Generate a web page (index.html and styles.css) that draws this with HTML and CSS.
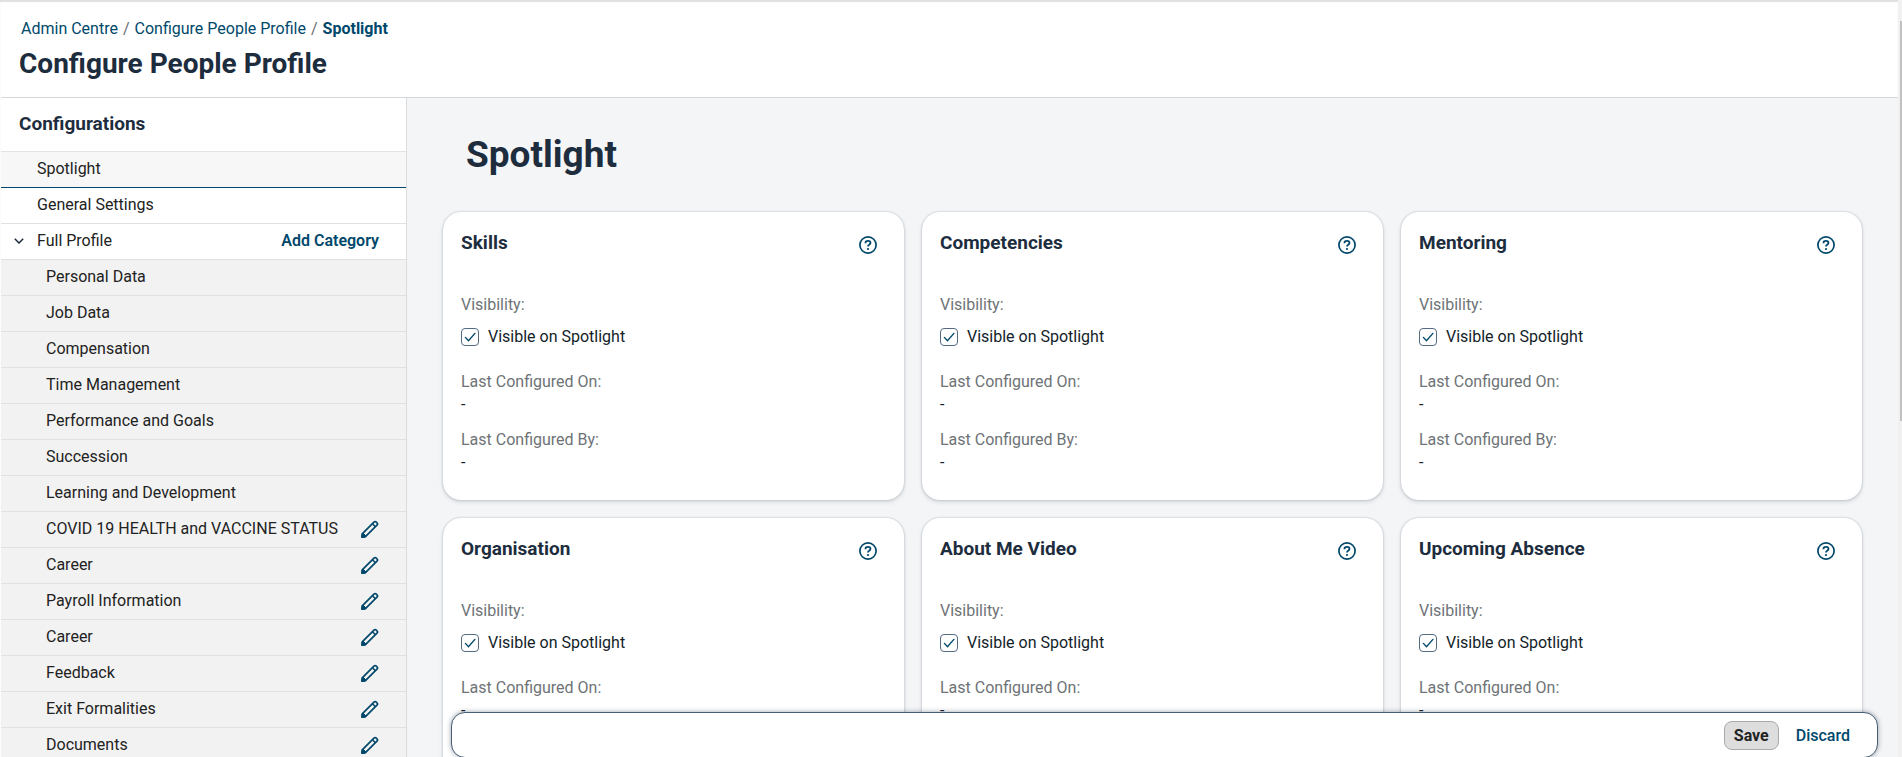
FILE: index.html
```
<!DOCTYPE html>
<html lang="en">
<head>
    <meta charset="UTF-8">
    <meta name="viewport" content="width=device-width, initial-scale=1.0">
    <title>Configure People Profile</title>
    <link rel="stylesheet" href="styles.css">
</head>
<body>
    <!-- shared icons -->
    <svg class="icon-defs" width="0" height="0" aria-hidden="true">
        <symbol id="icon-help" viewBox="0 0 18 18">
            <circle cx="9" cy="9" r="8.1" fill="none" stroke="currentColor" stroke-width="1.7"/>
            <path d="M6.5 7.2V6.8C6.5 5.5 7.5 4.8 9 4.8s2.5.8 2.5 2c0 1-.6 1.5-1.3 2-.7.4-1.2.8-1.2 1.7" fill="none" stroke="currentColor" stroke-width="1.8"/>
            <circle cx="9" cy="13" r="1.1" fill="currentColor"/>
        </symbol>
        <symbol id="icon-edit" viewBox="0 0 18 18">
            <path d="M1 17l.7-3.6L13.2 1.9a1.2 1.2 0 0 1 1.8 0l1.2 1.2a1.2 1.2 0 0 1 0 1.8L4.7 16.3z" fill="none" stroke="currentColor" stroke-width="1.7" stroke-linejoin="round"/>
            <path d="M11.4 3.7l3 3" fill="none" stroke="currentColor" stroke-width="1.5"/>
            <path d="M.6 17.4l.3-3.8 1.4-.3 2.5 2.5-.4 1.4z" fill="currentColor" stroke="currentColor" stroke-linejoin="round"/>
        </symbol>
    </svg>

    <div class="page">
        <header class="header">
            <nav class="breadcrumb" aria-label="Breadcrumb">
                <a href="#">Admin Centre</a>
                <span>/</span>
                <a href="#">Configure People Profile</a>
                <span>/</span>
                <a href="#" class="current">Spotlight</a>
            </nav>
            <h1>Configure People Profile</h1>
        </header>

        <div class="content">
            <aside class="sidebar">
                <h2>Configurations</h2>
                <ul class="config-list">
                    <li class="selected"><a href="#">Spotlight</a></li>
                    <li><a href="#">General Settings</a></li>
                    <li>
                        <button class="toggle" aria-label="Collapse Full Profile">
                            <svg width="10" height="6" viewBox="0 0 10 6"><path d="M.8.8L5 5 9.2.8" fill="none" stroke="currentColor" stroke-width="1.5"/></svg>
                        </button>
                        <a href="#">Full Profile</a>
                        <button class="add-btn">Add Category</button>
                    </li>
                    <li class="sub"><a href="#">Personal Data</a></li>
                    <li class="sub"><a href="#">Job Data</a></li>
                    <li class="sub"><a href="#">Compensation</a></li>
                    <li class="sub"><a href="#">Time Management</a></li>
                    <li class="sub"><a href="#">Performance and Goals</a></li>
                    <li class="sub"><a href="#">Succession</a></li>
                    <li class="sub"><a href="#">Learning and Development</a></li>
                    <li class="sub"><a href="#">COVID 19 HEALTH and VACCINE STATUS</a><button class="icon-btn" aria-label="Edit"><svg><use href="#icon-edit"/></svg></button></li>
                    <li class="sub"><a href="#">Career</a><button class="icon-btn" aria-label="Edit"><svg><use href="#icon-edit"/></svg></button></li>
                    <li class="sub"><a href="#">Payroll Information</a><button class="icon-btn" aria-label="Edit"><svg><use href="#icon-edit"/></svg></button></li>
                    <li class="sub"><a href="#">Career</a><button class="icon-btn" aria-label="Edit"><svg><use href="#icon-edit"/></svg></button></li>
                    <li class="sub"><a href="#">Feedback</a><button class="icon-btn" aria-label="Edit"><svg><use href="#icon-edit"/></svg></button></li>
                    <li class="sub"><a href="#">Exit Formalities</a><button class="icon-btn" aria-label="Edit"><svg><use href="#icon-edit"/></svg></button></li>
                    <li class="sub"><a href="#">Documents</a><button class="icon-btn" aria-label="Edit"><svg><use href="#icon-edit"/></svg></button></li>
                </ul>
            </aside>

            <main class="main">
                <h2 class="section-title">Spotlight</h2>

                <div class="cards">
                    <section class="card">
                        <div class="card-header">
                            <h3>Skills</h3>
                            <button class="icon-btn" aria-label="Help"><svg><use href="#icon-help"/></svg></button>
                        </div>
                        <p class="label">Visibility:</p>
                        <label class="check" for="skills"><input type="checkbox" id="skills" checked>Visible on Spotlight</label>
                        <dl>
                            <dt>Last Configured On:</dt>
                            <dd>-</dd>
                            <dt>Last Configured By:</dt>
                            <dd>-</dd>
                        </dl>
                    </section>

                    <section class="card">
                        <div class="card-header">
                            <h3>Competencies</h3>
                            <button class="icon-btn" aria-label="Help"><svg><use href="#icon-help"/></svg></button>
                        </div>
                        <p class="label">Visibility:</p>
                        <label class="check" for="competencies"><input type="checkbox" id="competencies" checked>Visible on Spotlight</label>
                        <dl>
                            <dt>Last Configured On:</dt>
                            <dd>-</dd>
                            <dt>Last Configured By:</dt>
                            <dd>-</dd>
                        </dl>
                    </section>

                    <section class="card">
                        <div class="card-header">
                            <h3>Mentoring</h3>
                            <button class="icon-btn" aria-label="Help"><svg><use href="#icon-help"/></svg></button>
                        </div>
                        <p class="label">Visibility:</p>
                        <label class="check" for="mentoring"><input type="checkbox" id="mentoring" checked>Visible on Spotlight</label>
                        <dl>
                            <dt>Last Configured On:</dt>
                            <dd>-</dd>
                            <dt>Last Configured By:</dt>
                            <dd>-</dd>
                        </dl>
                    </section>

                    <section class="card">
                        <div class="card-header">
                            <h3>Organisation</h3>
                            <button class="icon-btn" aria-label="Help"><svg><use href="#icon-help"/></svg></button>
                        </div>
                        <p class="label">Visibility:</p>
                        <label class="check" for="organisation"><input type="checkbox" id="organisation" checked>Visible on Spotlight</label>
                        <dl>
                            <dt>Last Configured On:</dt>
                            <dd>-</dd>
                        </dl>
                    </section>

                    <section class="card">
                        <div class="card-header">
                            <h3>About Me Video</h3>
                            <button class="icon-btn" aria-label="Help"><svg><use href="#icon-help"/></svg></button>
                        </div>
                        <p class="label">Visibility:</p>
                        <label class="check" for="aboutMe"><input type="checkbox" id="aboutMe" checked>Visible on Spotlight</label>
                        <dl>
                            <dt>Last Configured On:</dt>
                            <dd>-</dd>
                        </dl>
                    </section>

                    <section class="card">
                        <div class="card-header">
                            <h3>Upcoming Absence</h3>
                            <button class="icon-btn" aria-label="Help"><svg><use href="#icon-help"/></svg></button>
                        </div>
                        <p class="label">Visibility:</p>
                        <label class="check" for="absence"><input type="checkbox" id="absence" checked>Visible on Spotlight</label>
                        <dl>
                            <dt>Last Configured On:</dt>
                            <dd>-</dd>
                        </dl>
                    </section>
                </div>

                <footer class="action-bar">
                    <button class="save-btn">Save</button>
                    <button class="discard-btn">Discard</button>
                </footer>
            </main>
        </div>
    </div>

    <div class="scrollbar"><div class="thumb"></div></div>
</body>
</html>
```

FILE: styles.css
```
* {
    box-sizing: border-box;
}

body {
    margin: 0;
    height: 100vh;
    display: flex;
    overflow: hidden;
    font-family: Roboto, "Noto Sans", Arial, sans-serif;
    font-size: 16px;
    line-height: 20px;
    color: #1d2d3e;
    background-color: #fff;
}

h1, h2, h3, p, ul, dl, dd {
    margin: 0;
    padding: 0;
}

a {
    color: #00486b;
    text-decoration: none;
}

button {
    font: inherit;
    color: #00486b;
    background: none;
    border: none;
    padding: 0;
    cursor: pointer;
}

.icon-defs {
    position: absolute;
}

.page {
    flex: 1;
    min-width: 0;
    display: flex;
    flex-direction: column;
    padding-left: 1px;
    box-shadow: inset 0 2px 1px #e0e0e0;
}

.header {
    padding: 19px 18px 16px;
    border-bottom: 1px solid #d5d8da;
}

.breadcrumb {
    display: flex;
    gap: 5px;
    padding-left: 2px;
}

.breadcrumb span {
    color: #6a6d70;
}

.breadcrumb .current {
    font-weight: bold;
}

.header h1 {
    margin-top: 8px;
    font-size: 28px;
    line-height: 34px;
    font-weight: 700;
}

.content {
    flex: 1;
    min-height: 0;
    display: flex;
}

/* left list */
.sidebar {
    flex: none;
    width: 406px;
    border-right: 1px solid #d9dcdf;
    overflow: hidden;
}

.sidebar h2 {
    padding: 14px 18px 15px;
    font-size: 19px;
    line-height: 24px;
    border-bottom: 1px solid #e3e3e3;
}

.config-list {
    list-style: none;
}

.config-list li {
    display: flex;
    align-items: center;
    height: 36px;
    padding: 0 27px 2px 36px;
    border-bottom: 1px solid #e1e1e1;
}

.config-list a {
    flex: 1;
    color: #222;
}

.config-list .selected {
    background-color: #f7f7f7;
    border-bottom-color: #00486b;
}

.config-list .sub {
    padding-left: 45px;
    background-color: #f2f2f2;
}

.toggle {
    display: flex;
    width: 23px;
    margin-left: -23px;
    color: #1d2d3e;
}

.add-btn {
    font-weight: 600;
}

.icon-btn {
    display: flex;
}

.icon-btn svg {
    width: 18px;
    height: 18px;
}

/* right side */
.main {
    position: relative;
    flex: 1;
    min-width: 0;
    padding: 32px 36px;
    overflow: hidden;
    background-color: #f4f5f7;
}

.section-title {
    padding-left: 23px;
    font-size: 37px;
    line-height: 50px;
}

.cards {
    display: grid;
    grid-template-columns: repeat(3, 1fr);
    gap: 18px;
    margin-top: 32px;
}

.card {
    min-height: 288px;
    padding: 20px 27px 18px 18px;
    background-color: #fff;
    border-radius: 18px;
    box-shadow: 0 0 2px rgba(34, 53, 72, 0.3), 0 2px 4px rgba(34, 53, 72, 0.16);
}

.card-header {
    display: flex;
    justify-content: space-between;
    align-items: flex-end;
    height: 22px;
}

.card-header h3 {
    font-size: 19px;
    line-height: 22px;
}

.label, dt {
    color: #6e7376;
}

.label {
    margin-top: 41px;
}

.check {
    display: flex;
    align-items: center;
    gap: 9px;
    margin-top: 12px;
    color: #131e29;
}

.check input {
    appearance: none;
    width: 18px;
    height: 18px;
    margin: 0;
    border: 1px solid #556b82;
    border-radius: 4px;
}

/* tick mark */
.check input:checked {
    background: url("data:image/svg+xml,%3Csvg xmlns='http://www.w3.org/2000/svg' viewBox='0 0 16 16'%3E%3Cpath d='M3.4 8.4l3.1 3.4 6.4-7.4' fill='none' stroke='%2300486b' stroke-width='1.4' stroke-linecap='round'/%3E%3C/svg%3E") center no-repeat;
}

dl {
    margin-top: 25px;
}

dd {
    margin: 3px 0 15px;
    color: #131e29;
}

dd:last-child {
    margin-bottom: 0;
}

.action-bar {
    position: absolute;
    left: 44px;
    right: 20px;
    bottom: -1px;
    display: flex;
    justify-content: flex-end;
    align-items: center;
    gap: 17px;
    height: 46px;
    padding: 1px 27px 0;
    background-color: #fff;
    border: 1px solid #475e75;
    border-radius: 14px;
    box-shadow: 0 0 5px rgba(34, 53, 72, 0.45);
}

.save-btn {
    height: 29px;
    padding: 0 9px;
    font-weight: bold;
    color: #222;
    background-color: #ddd;
    border: 1px solid #aaa;
    border-radius: 8px;
}

.discard-btn {
    font-weight: 500;
}

.scrollbar {
    flex: none;
    width: 4px;
    padding: 21px 0 0 2px;
    background-color: #f1f1f1;
}

.thumb {
    height: 400px;
    background-color: #c1c1c1;
}

@media (max-width: 1000px) {
    .sidebar {
        width: 300px;
    }
    .cards {
        grid-template-columns: 1fr;
    }
}
```
